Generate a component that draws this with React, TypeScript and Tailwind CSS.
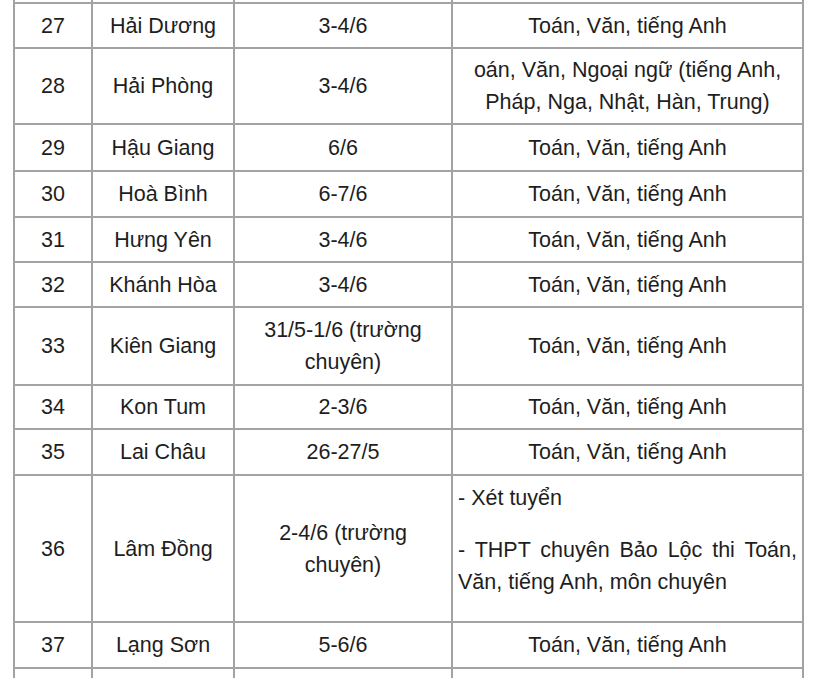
import React from "react";

type Row = {
  no: string;
  province: string;
  date: React.ReactNode;
  subjects: React.ReactNode;
  h: string;
};

const rows: Row[] = [
  { no: "27", province: "Hải Dương", date: "3-4/6", subjects: "Toán, Văn, tiếng Anh", h: "h-[45px]" },
  {
    no: "28",
    province: "Hải Phòng",
    date: "3-4/6",
    subjects: (
      <>
        oán, Văn, Ngoại ngữ (tiếng Anh,
        <br />
        Pháp, Nga, Nhật, Hàn, Trung)
      </>
    ),
    h: "h-[76px]",
  },
  { no: "29", province: "Hậu Giang", date: "6/6", subjects: "Toán, Văn, tiếng Anh", h: "h-[47px]" },
  { no: "30", province: "Hoà Bình", date: "6-7/6", subjects: "Toán, Văn, tiếng Anh", h: "h-[46px]" },
  { no: "31", province: "Hưng Yên", date: "3-4/6", subjects: "Toán, Văn, tiếng Anh", h: "h-[45px]" },
  { no: "32", province: "Khánh Hòa", date: "3-4/6", subjects: "Toán, Văn, tiếng Anh", h: "h-[45px]" },
  {
    no: "33",
    province: "Kiên Giang",
    date: (
      <>
        31/5-1/6 (trường
        <br />
        chuyên)
      </>
    ),
    subjects: "Toán, Văn, tiếng Anh",
    h: "h-[78px]",
  },
  { no: "34", province: "Kon Tum", date: "2-3/6", subjects: "Toán, Văn, tiếng Anh", h: "h-[44px]" },
  { no: "35", province: "Lai Châu", date: "26-27/5", subjects: "Toán, Văn, tiếng Anh", h: "h-[46px]" },
];

const cell = "border-2 border-[#a3a3a3] px-[6px] py-[5px] text-center align-middle";

export default function App() {
  return (
    <div className="h-[678px] w-[820px] overflow-hidden bg-white font-['Liberation_Sans',Arial,sans-serif] text-[21.5px] leading-[32px] text-[#1e1e1e]">
      <table className="ml-[13px] mt-[-43px] w-[789px] table-fixed border-collapse">
        <colgroup>
          <col className="w-[78px]" />
          <col className="w-[142px]" />
          <col className="w-[218px]" />
          <col className="w-[351px]" />
        </colgroup>
        <tbody>
          {/* row above, cut off by the top edge */}
          <tr className="h-[45px]">
            <td className={cell}></td>
            <td className={cell}></td>
            <td className={cell}></td>
            <td className={cell}></td>
          </tr>
          {rows.map((r) => (
            <tr key={r.no} className={r.h}>
              <td className={cell}>{r.no}</td>
              <td className={cell}>{r.province}</td>
              <td className={cell}>{r.date}</td>
              <td className={cell}>{r.subjects}</td>
            </tr>
          ))}
          <tr className="h-[147px]">
            <td className={cell}>36</td>
            <td className={cell}>Lâm Đồng</td>
            <td className={cell}>
              2-4/6 (trường
              <br />
              chuyên)
            </td>
            <td className="border-2 border-[#a3a3a3] px-[5px] pt-[6px] pb-[2px] text-left align-top">
              <p className="mb-5 text-justify">- Xét tuyển</p>
              <p className="mb-5 text-justify">
                - THPT chuyên Bảo Lộc thi Toán, Văn, tiếng Anh, môn chuyên
              </p>
            </td>
          </tr>
          <tr className="h-[46px]">
            <td className={cell}>37</td>
            <td className={cell}>Lạng Sơn</td>
            <td className={cell}>5-6/6</td>
            <td className={cell}>Toán, Văn, tiếng Anh</td>
          </tr>
          {/* next row, cut off by the bottom edge */}
          <tr className="h-[46px]">
            <td className={cell}></td>
            <td className={cell}></td>
            <td className={cell}></td>
            <td className={cell}></td>
          </tr>
        </tbody>
      </table>
    </div>
  );
}
